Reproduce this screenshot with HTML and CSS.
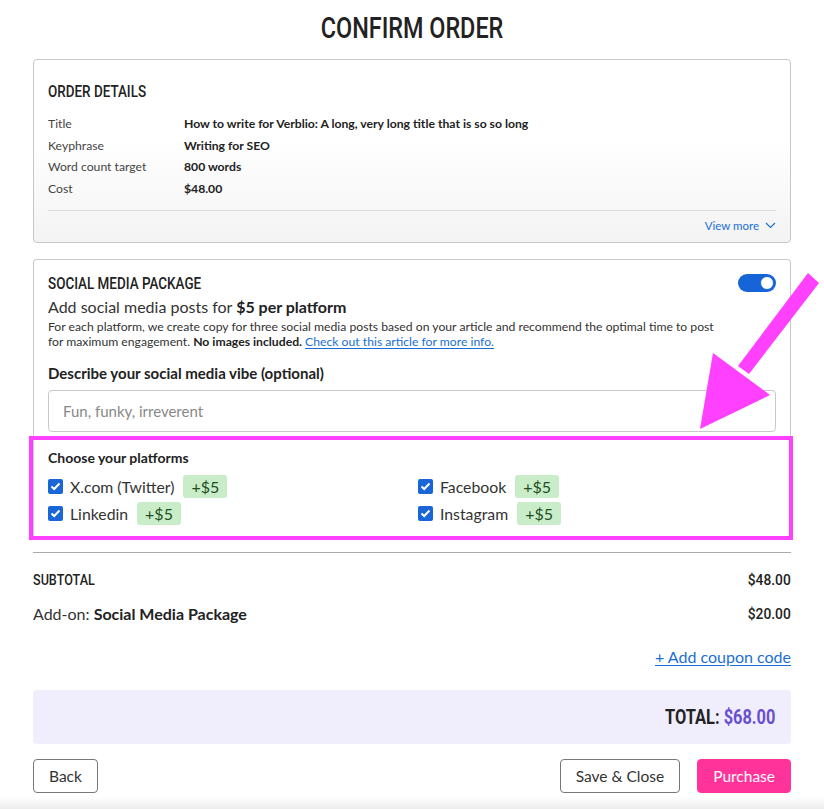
FILE: index.html
```html
<!DOCTYPE html>
<html>

<head>
    <meta charset="UTF-8" />
    <meta name="viewport" content="width=device-width, initial-scale=1.0">
    <title>Confirm Order</title>
    <link rel="stylesheet" href="styles.css">
</head>

<body>
    <div class="page">
        <h1 class="page-title"><span class="cond">Confirm Order</span></h1>

        <div class="card details">
            <h2 class="card-title"><span class="cond">Order Details</span></h2>
            <div class="detail-rows">
                <div class="label">Title</div>
                <div class="value">How to write for Verblio: A long, very long title that is so so long</div>
                <div class="label">Keyphrase</div>
                <div class="value">Writing for SEO</div>
                <div class="label">Word count target</div>
                <div class="value">800 words</div>
                <div class="label">Cost</div>
                <div class="value">$48.00</div>
            </div>
            <div class="view-more">View more
                <svg width="11" height="7" viewBox="0 0 11 7"><polyline points="1,1 5.5,5.5 10,1" fill="none" stroke="#1a6fd6" stroke-width="1.2"/></svg>
            </div>
        </div>

        <div class="card social">
            <div class="social-head">
                <h2 class="card-title"><span class="cond">Social Media Package</span></h2>
                <span class="toggle"><span class="knob"></span></span>
            </div>
            <p class="lead">Add social media posts for <b>$5 per platform</b></p>
            <div class="small">
                <span class="line">For each platform, we create copy for three social media posts based on your article and recommend the optimal time to post</span>
                <span class="line">for maximum engagement. <b>No images included.</b> <a href="#">Check out this article for more info.</a></span>
            </div>
            <label class="field-label">Describe your social media vibe (optional)</label>
            <div class="input">Fun, funky, irreverent</div>

            <div class="platforms">
                <div class="field-label">Choose your platforms</div>
                <div class="platform-grid">
                    <div class="platform"><span class="check"><svg width="11" height="9" viewBox="0 0 11 9"><polyline points="1.5,4.5 4.2,7 9.5,1.5" fill="none" stroke="#fff" stroke-width="2"/></svg></span>X.com (Twitter) <span class="badge">+$5</span></div>
                    <div class="platform"><span class="check"><svg width="11" height="9" viewBox="0 0 11 9"><polyline points="1.5,4.5 4.2,7 9.5,1.5" fill="none" stroke="#fff" stroke-width="2"/></svg></span>Facebook <span class="badge">+$5</span></div>
                    <div class="platform"><span class="check"><svg width="11" height="9" viewBox="0 0 11 9"><polyline points="1.5,4.5 4.2,7 9.5,1.5" fill="none" stroke="#fff" stroke-width="2"/></svg></span>Linkedin <span class="badge">+$5</span></div>
                    <div class="platform"><span class="check"><svg width="11" height="9" viewBox="0 0 11 9"><polyline points="1.5,4.5 4.2,7 9.5,1.5" fill="none" stroke="#fff" stroke-width="2"/></svg></span>Instagram <span class="badge">+$5</span></div>
                </div>
            </div>
        </div>

        <div class="summary">
            <div class="sum-row">
                <span class="cond">Subtotal</span>
                <span class="cond price">$48.00</span>
            </div>
            <div class="sum-row">
                <span>Add-on: <b>Social Media Package</b></span>
                <span class="cond price">$20.00</span>
            </div>
            <div class="coupon"><a href="#">+ Add coupon code</a></div>
            <div class="total"><span class="cond">TOTAL: <span class="total-amount">$68.00</span></span></div>
        </div>

        <div class="actions">
            <button class="btn">Back</button>
            <div class="actions-right">
                <button class="btn">Save &amp; Close</button>
                <button class="btn primary">Purchase</button>
            </div>
        </div>
    </div>
    <div class="footer-shade"></div>

    <!-- annotation arrow -->
    <svg class="annotation" width="824" height="809" viewBox="0 0 824 809">
        <polygon points="808,273 819,283 749,374 738,366" fill="#ff40ff"/>
        <polygon points="713,353 770,395 700,429" fill="#ff40ff"/>
    </svg>
</body>

</html>
```

FILE: styles.css
```css
body {
    margin: 0;
    position: relative;
    font-family: Lato, "Open Sans", sans-serif;
    color: #333;
    background: #fff;
}

.page {
    width: 758px;
    margin: 0 auto;
}

/* narrow display face, squeezed from Roboto */
.cond {
    display: inline-block;
    font-family: Roboto, "Liberation Sans", sans-serif;
    font-weight: 500;
    text-transform: uppercase;
    color: #222;
    transform: scaleX(.84);
    transform-origin: left center;
    white-space: nowrap;
}

.page-title {
    margin: 0;
    padding-top: 8px;
    height: 51px;
    font-size: 30px;
    line-height: 36px;
    font-weight: normal;
    text-align: center;
}

.page-title .cond {
    transform: scaleX(.78);
    transform-origin: center;
}

.card {
    border: 1px solid #c8c8c8;
    border-radius: 4px;
    padding: 0 14px;
}

.card-title {
    margin: 0;
    font-size: 16px;
    line-height: 20px;
    font-weight: normal;
}

.details {
    padding-top: 21px;
    padding-bottom: 8px;
    background: linear-gradient(to bottom, #fff 45%, #f3f3f3 100%);
}

.detail-rows {
    display: grid;
    grid-template-columns: 136px 1fr;
    margin-top: 11px;
    font-size: 12.2px;
    line-height: 21.7px;
}

.detail-rows .label {
    color: #444;
}

.detail-rows .value {
    font-weight: bold;
    color: #222;
}

.view-more {
    margin-top: 10px;
    border-top: 1px solid #ddd;
    padding-top: 7px;
    text-align: right;
    font-size: 11.5px;
    line-height: 16px;
    color: #1a6fd6;
}

.view-more svg {
    margin-left: 3px;
    vertical-align: 1px;
}

.social {
    margin-top: 16px;
    padding-top: 13px;
    padding-bottom: 0;
    border-bottom: none;
    border-radius: 4px 4px 0 0;
}

.social-head {
    display: flex;
    justify-content: space-between;
    align-items: center;
}

.toggle {
    width: 38px;
    height: 18px;
    border-radius: 9px;
    background: #1565d8;
    display: flex;
    justify-content: flex-end;
    align-items: center;
    padding: 0 2px;
    box-sizing: border-box;
}

.knob {
    width: 14px;
    height: 14px;
    border-radius: 50%;
    background: #fff;
    border: 1px solid #1565d8;
    box-sizing: border-box;
}

.lead {
    margin: 3px 0 0;
    font-size: 16px;
    line-height: 20px;
}

.lead b {
    color: #222;
}

.small {
    margin-top: 2px;
    font-size: 12.2px;
    line-height: 15px;
    color: #333;
}

.small .line {
    display: block;
    white-space: nowrap;
}

.small b {
    color: #222;
}

.small a,
.coupon a {
    color: #1a6fd6;
    text-decoration: underline;
    text-underline-offset: 2px;
}

.field-label {
    display: block;
    font-size: 15px;
    line-height: 20px;
    font-weight: bold;
    color: #222;
}

.social > .field-label {
    margin-top: 14px;
}

.input {
    margin-top: 7px;
    height: 42px;
    border: 1px solid #c8c8c8;
    border-radius: 4px;
    box-sizing: border-box;
    padding: 0 14px;
    font-size: 15px;
    line-height: 40px;
    color: #888;
}

.platforms {
    margin: 4px -17px 0 -19px;
    border: 4px solid #ff40ff;
    padding: 8px 15px 9px;
}

.platforms .field-label {
    font-size: 14px;
}

.platform-grid {
    display: grid;
    grid-template-columns: 370px 1fr;
    margin-top: 5px;
}

.platform {
    display: flex;
    align-items: center;
    height: 27px;
    font-size: 15.8px;
    color: #333;
}

.check {
    width: 15px;
    height: 15px;
    border-radius: 2px;
    background: #1a66d6;
    display: inline-flex;
    align-items: center;
    justify-content: center;
    margin-right: 7px;
}

.badge {
    margin-left: 9px;
    padding: 1px 8px;
    border-radius: 3px;
    background: #c9edc9;
    color: #1f4f1f;
    font-size: 16px;
    line-height: 21px;
}

.summary {
    margin-top: 12px;
    border-top: 1px solid #aaa;
}

.sum-row {
    display: flex;
    justify-content: space-between;
    align-items: center;
    font-size: 16px;
    line-height: 20px;
    margin-top: 14px;
}

.sum-row:first-child {
    margin-top: 17px;
}

.sum-row b {
    color: #222;
}

.sum-row .cond {
    font-size: 15px;
}

.sum-row .price {
    transform: scaleX(.92);
    transform-origin: right center;
}

.coupon {
    margin-top: 23px;
    text-align: right;
    font-size: 16px;
    line-height: 20px;
}

.total {
    margin-top: 23px;
    height: 54px;
    background: #f0eefc;
    border-radius: 4px;
    padding: 0 16px;
    display: flex;
    justify-content: flex-end;
    align-items: center;
    font-size: 21px;
}

.total .cond {
    font-weight: bold;
    transform: scaleX(.78);
    transform-origin: right center;
}

.total-amount {
    color: #6a4fd0;
}

.actions {
    margin-top: 15px;
    display: flex;
    justify-content: space-between;
}

.actions-right {
    display: flex;
    gap: 17px;
}

.btn {
    height: 34px;
    padding: 0 15px;
    border: 1px solid #777;
    border-radius: 4px;
    background: #fff;
    font-family: Lato, "Open Sans", sans-serif;
    font-size: 15.5px;
    color: #333;
}

.btn.primary {
    background: #ff3399;
    border-color: #ff3399;
    color: #fff;
    padding: 0 15px;
}

.footer-shade {
    margin-top: 4px;
    height: 12px;
    background: linear-gradient(to bottom, #fff, #ececec);
}

.annotation {
    position: absolute;
    top: 0;
    left: 0;
    pointer-events: none;
}
```
